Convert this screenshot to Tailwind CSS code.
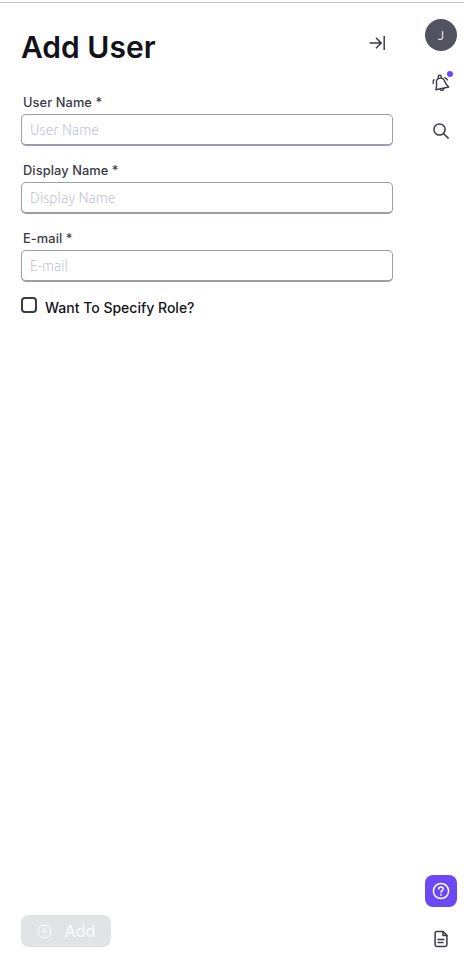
<!DOCTYPE html>
<html lang="en">
<head>
<meta charset="utf-8">
<title>Add User</title>
<script src="https://cdn.jsdelivr.net/npm/@tailwindcss/browser@4"></script>
</head>
<body class="h-[971px] overflow-hidden bg-white font-['Inter',sans-serif] text-[#12131a]">
<div class="flex h-full border-t-2 border-white">
<div class="flex h-full w-full border-t border-[#c4c4c7]">
  <main class="flex w-[393px] flex-col pl-[21px]">
    <header class="mt-[19px] flex h-[48px] items-center justify-between pr-[7px]">
      <h1 class="mt-0.5 text-[30px] leading-[44px] font-semibold">Add User</h1>
      <button aria-label="Close panel" class="mb-[6px]">
        <svg class="size-[18px]" viewBox="0 0 18 18" fill="none" stroke="#393a45" stroke-width="1.5"><path d="M1.7 9h11.6M8 3.8 13.2 9 8 14.2M16.2 2v14"/></svg>
      </button>
    </header>
    <form class="mt-[24px] flex flex-col">
      <label class="flex h-[68px] flex-col"><span class="h-5 pl-[2px] text-[12.8px] leading-[17px] font-medium tracking-[0.1px] text-[#393a45]">User Name *</span>
        <input class="h-8 w-full rounded-[5px] border border-b-2 border-[#9b9cad] px-2 font-['Ubuntu','Open_Sans',sans-serif] text-[14px] font-light tracking-[0.1px] outline-none placeholder:text-[#c4c5cf]" placeholder="User Name"></label>
      <label class="flex h-[68px] flex-col"><span class="h-5 pl-[2px] text-[12.8px] leading-[17px] font-medium tracking-[0.1px] text-[#393a45]">Display Name *</span>
        <input class="h-8 w-full rounded-[5px] border border-b-2 border-[#9b9cad] px-2 font-['Ubuntu','Open_Sans',sans-serif] text-[14px] font-light tracking-[0.1px] outline-none placeholder:text-[#c4c5cf]" placeholder="Display Name"></label>
      <label class="flex h-[68px] flex-col"><span class="h-5 pl-[2px] text-[12.8px] leading-[17px] font-medium tracking-[0.1px] text-[#393a45]">E-mail *</span>
        <input class="h-8 w-full rounded-[5px] border border-b-2 border-[#9b9cad] px-2 font-['Ubuntu','Open_Sans',sans-serif] text-[14px] font-light tracking-[0.1px] outline-none placeholder:text-[#c4c5cf]" placeholder="E-mail"></label>
      <label class="-mt-px flex items-start gap-2"><input type="checkbox" class="size-4 appearance-none rounded-[4px] border-2 border-[#393a45]"><span class="mt-px text-[14px] leading-5 font-medium">Want To Specify Role?</span></label>
    </form>
    <button class="mt-auto mb-6 flex h-8 w-[90px] items-center rounded-lg bg-[#e2e3e7] pl-4 text-[#f7f7f9]">
      <svg class="size-[15px]" viewBox="0 0 15 15" fill="none" stroke="currentColor" stroke-width="1.1"><circle cx="7.5" cy="7.5" r="6.4"/><path d="M7.5 4.3v6.4M4.3 7.5h6.4"/></svg>
      <span class="ml-[12.5px] text-[16px] leading-6 font-medium">Add</span>
    </button>
  </main>
  <aside class="ml-8 flex w-8 flex-col items-center pt-[16px] pb-4">
    <div class="flex size-8 items-center justify-center rounded-full bg-[#525360] pt-0.5 font-['Ubuntu','Noto_Sans',sans-serif] text-[13px] text-[#eef0f5]">J</div>
    <button aria-label="Notifications" class="relative mt-4 flex size-8 items-center justify-center">
      <svg class="size-[20px]" viewBox="0 0 20 20" fill="none" stroke="#393a45" stroke-width="1.4" stroke-linecap="round" stroke-linejoin="round"><path d="M8 5.4C5.8 6.1 5.2 7.8 5.5 9.8c.4 2.6.1 4.6-.6 6.9l12.9-2.7c-1.9-1.5-3.1-2.7-3.8-5-.8-2.6-3-4.5-6-3.6Z"/><path d="M7.2 5.2V3.9a1.5 1.5 0 0 1 3-.3l.2 1.3M9.2 16.5c.8 1.4 3.2 1 3.5-.7M2.2 10.4c-.4-1.5-.1-2.7.7-3.7M13.8 4.6c1.2.4 2 1.2 2.5 2.3"/></svg>
      <span class="absolute top-1 right-1 size-1.5 rounded-full bg-[#6c47f5]"></span>
    </button>
    <button aria-label="Search" class="mt-4 flex size-8 items-center justify-center">
      <svg class="size-4" viewBox="0 0 16 16" fill="none" stroke="#393a45" stroke-width="1.5" stroke-linecap="round"><circle cx="6.5" cy="6.5" r="5.6"/><path d="m10.7 10.7 4.5 4.4"/></svg>
    </button>
    <button aria-label="Help" class="mt-auto flex size-8 items-center justify-center rounded-lg bg-[#6c47f5]">
      <svg class="size-[18px]" viewBox="0 0 18 18" fill="none" stroke="white" stroke-width="1.5" stroke-linecap="round"><circle cx="9" cy="9" r="7.6"/><path d="M6.8 7.1c0-1.3 1-2.1 2.2-2.1s2.2.8 2.2 2c0 1.5-2.2 1.6-2.2 3.2"/><circle cx="9" cy="12.7" r=".3"/></svg>
    </button>
    <button aria-label="Documents" class="mt-4 flex size-8 items-center justify-center">
      <svg class="h-[18px] w-[14px]" viewBox="0 0 14 18" fill="none" stroke="#393a45" stroke-width="1.5" stroke-linecap="round" stroke-linejoin="round"><path d="M9 1.5H2.8A1.7 1.7 0 0 0 1.1 3.2v11.6c0 1 .7 1.7 1.7 1.7h8.4c1 0 1.7-.7 1.7-1.7V5.4Z"/><path d="M9 1.5v3.9h3.9M4 9.5h6M4 12.5h5"/></svg>
    </button>
  </aside>
</div>
</div>
</body>
</html>
